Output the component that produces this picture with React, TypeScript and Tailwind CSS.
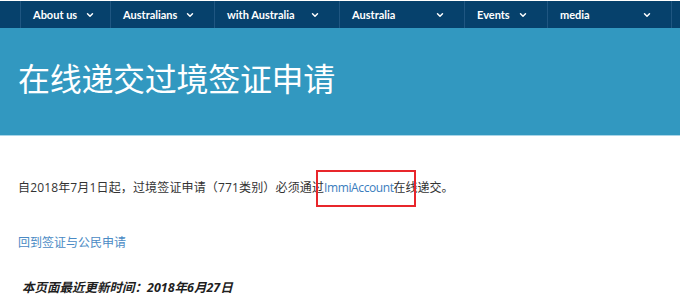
import React from 'react';
import { ChevronDown } from 'lucide-react';

const navItems = [
  { label: 'About us', width: 'w-[90px]' },
  { label: 'Australians', width: 'w-[104px]' },
  { label: 'with Australia', width: 'w-[125px]' },
  { label: 'Australia', width: 'w-[125px]' },
  { label: 'Events', width: 'w-[83px]' },
  { label: 'media', width: 'w-[124px]' },
];

const cjk = "font-['Open_Sans','Noto_Sans_CJK_SC',sans-serif]";

export default function App() {
  return (
    <div className="w-[680px] h-[301px] overflow-hidden bg-white">
      {/* top nav */}
      <nav className="mt-px h-[27px] bg-[#06416c] flex font-['Lato',sans-serif] text-[11px] font-bold text-white">
        <div className="w-[20px]" />
        {navItems.map((item) => (
          <div
            key={item.label}
            className={`${item.width} relative flex items-center justify-between gap-2 pl-3 pr-[19px] border-l border-[#1f5681] whitespace-nowrap`}
          >
            <span className="leading-none">{item.label}</span>
            <ChevronDown className="w-[10px] h-[10px] shrink-0" strokeWidth={3.5} />
          </div>
        ))}
        <div className="flex-1 border-l border-[#1f5681]" />
      </nav>

      {/* banner */}
      <div className="h-[108px] bg-[#3298c0] border-b border-[#a9d5e8] flex items-center px-[18px]">
        <h1 className={`${cjk} text-[32px] font-normal text-white tracking-[-0.3px] leading-none pb-[6px]`}>
          在线递交过境签证申请
        </h1>
      </div>

      <div className={`${cjk} px-[18px] text-[12px] text-[#333]`}>
        <p className="mt-[44px] leading-[16px] whitespace-nowrap">
          <span className="tracking-[0.15px]">自2018年7月1日起，过境签证申请（771类别）必须通过</span>
          <span className="relative text-[#3a7dbd] tracking-[-0.4px]">
            ImmiAccount
            <span className="absolute left-[-8px] right-[-22px] top-[-9px] bottom-[-11px] border-2 border-[#e8262b]" />
          </span>
          在线递交。
        </p>
        <p className="mt-[39px] leading-[16px] text-[#4a8ac4]">回到签证与公民申请</p>
        <p className="mt-[29px] leading-[16px] text-[12.5px] font-bold italic text-[#1f1f1f] pl-[4px]">
          本页面最近更新时间：2018年6月27日
        </p>
      </div>
    </div>
  );
}
